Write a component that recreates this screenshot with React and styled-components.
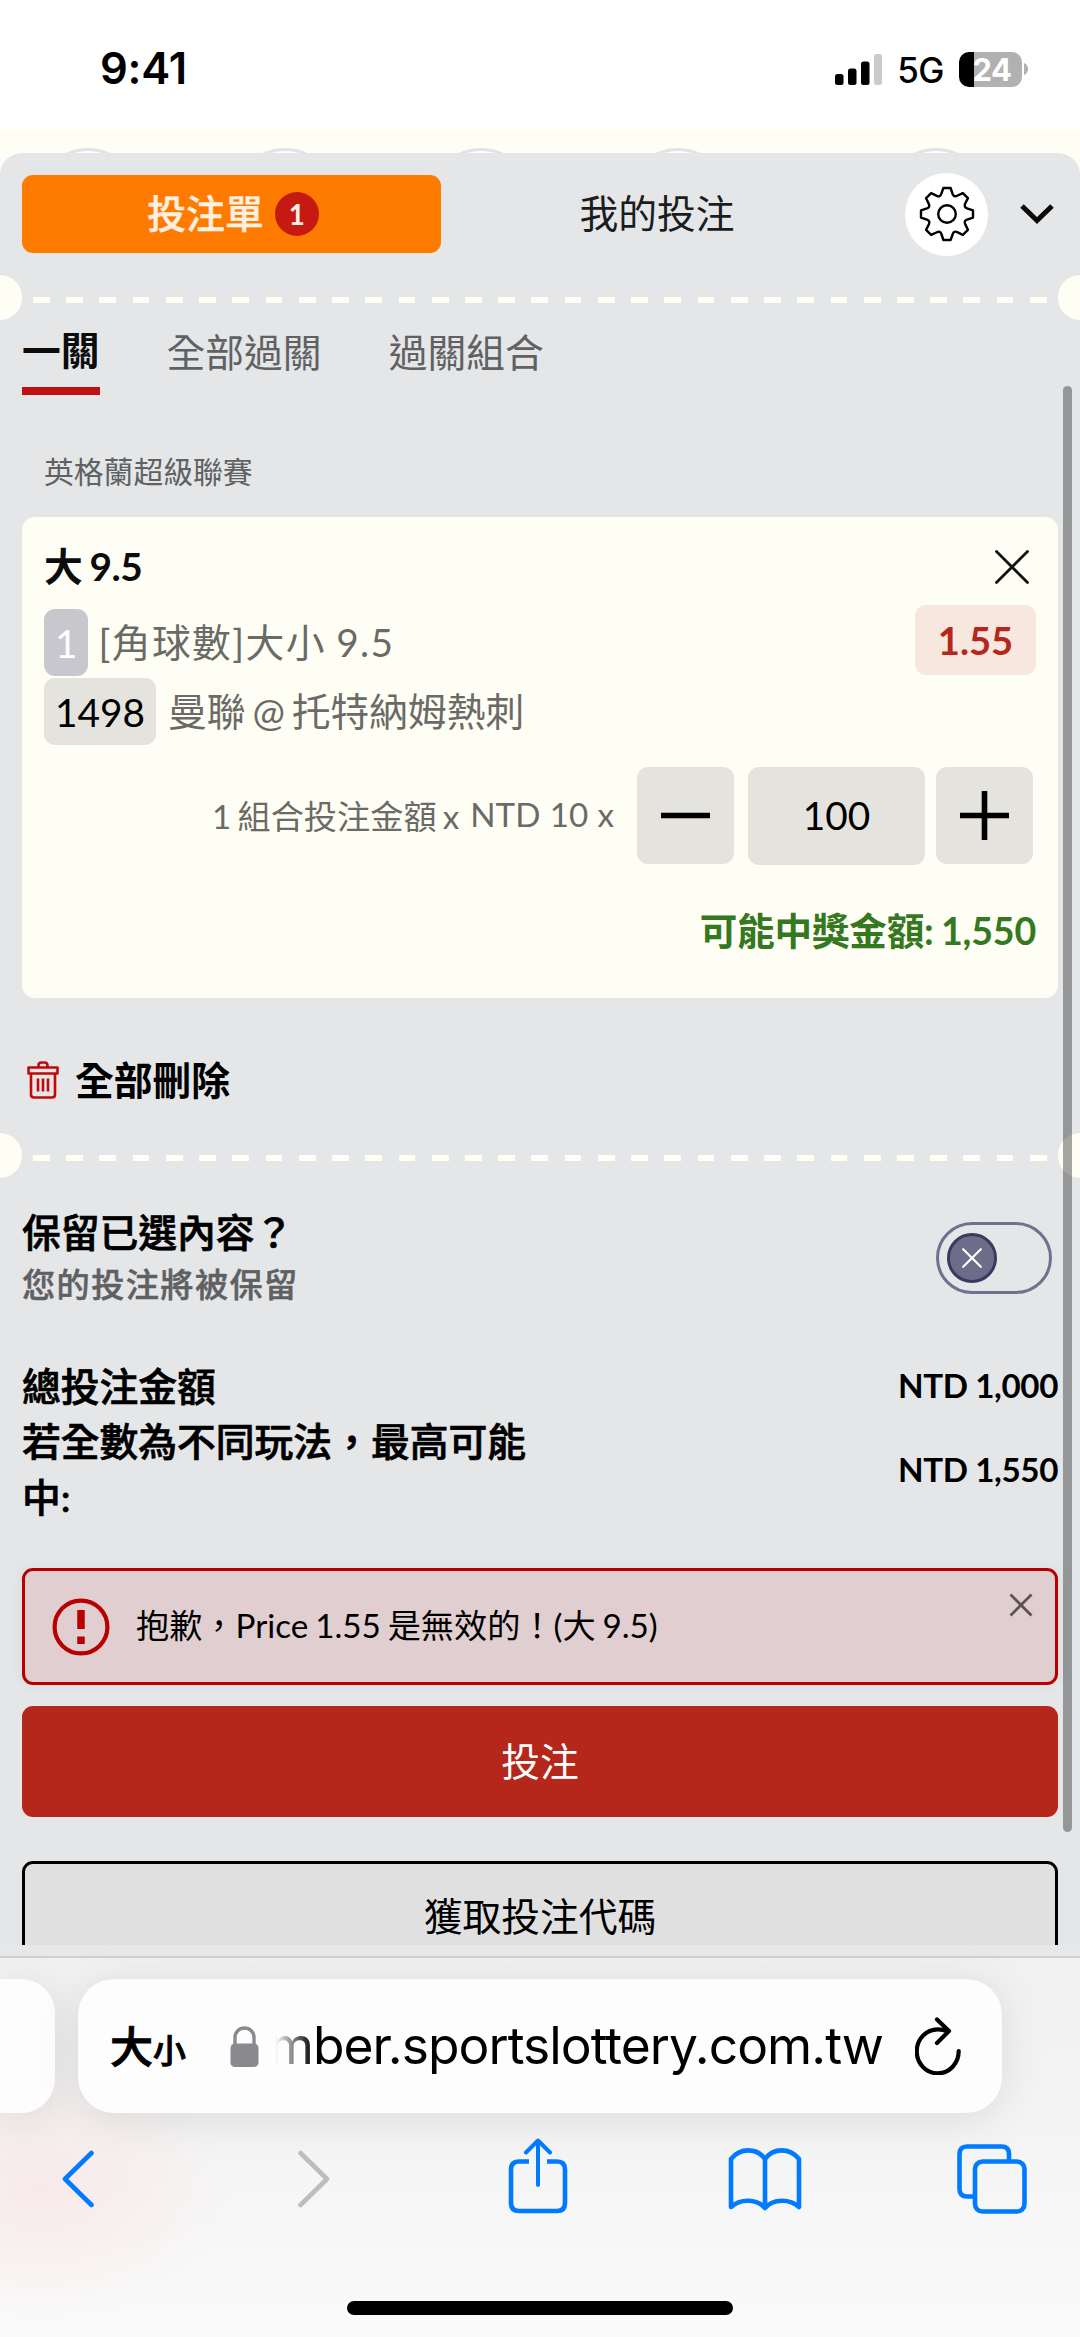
import React, { useState } from "react";
import styled, { createGlobalStyle, css } from "styled-components";

const sans = `Lato, "Noto Sans CJK TC", sans-serif`;
const system = `Inter, "Noto Sans CJK TC", sans-serif`;

const selection = {
  league: "英格蘭超級聯賽",
  pick: "大 9.5",
  market: "[角球數]大小 9.5",
  eventCode: "1498",
  match: "曼聯 @ 托特納姆熱刺",
  price: "1.55",
};

const betTypes = ["一關", "全部過關", "過關組合"];

// one tooth of the cog plus the valley up to the next one
const cogTooth = (i) => {
  const rotate = ([x, y]) => {
    const a = (i * Math.PI) / 4;
    const px = x * Math.cos(a) - y * Math.sin(a);
    const py = x * Math.sin(a) + y * Math.cos(a);
    return `${px.toFixed(2)} ${py.toFixed(2)}`;
  };
  return [
    `${i === 0 ? "M" : "L"}${rotate([-3.6, -26])}`,
    `L${rotate([3.6, -26])}`,
    `L${rotate([5.6, -20])}`,
    `Q${rotate([6.9, -16.6])} ${rotate([10.1, -18.2])}`,
  ].join(" ");
};
const cogPath = [0, 1, 2, 3, 4, 5, 6, 7].map(cogTooth).join(" ") + "Z";

function StatusBar() {
  return (
    <Status>
      <Clock>9:41</Clock>
      <StatusIcons>
        <svg width="47" height="31" viewBox="0 0 47 31">
          <rect x="0" y="20" width="8.5" height="11" rx="2.5" />
          <rect x="13" y="14.5" width="8.5" height="16.5" rx="2.5" />
          <rect x="26" y="7.5" width="8.5" height="23.5" rx="2.5" />
          <rect x="39" y="0" width="8" height="31" rx="2.5" fill="#cbcbcb" />
        </svg>
        <Network>5G</Network>
        <Battery>
          <span>24</span>
        </Battery>
        <svg width="5" height="12" viewBox="0 0 5 12">
          <path d="M0 0C5.5 2 5.5 10 0 12Z" fill="#b1b1b1" />
        </svg>
      </StatusIcons>
    </Status>
  );
}

function Perforation() {
  return (
    <Divider>
      <Notch />
      <Dashes />
      <Notch $right />
    </Divider>
  );
}

function SelectionCard({ stake, setStake }) {
  return (
    <Card>
      <CardTitle>
        <h3>{selection.pick}</h3>
        <svg width="34" height="34" viewBox="0 0 34 34">
          <path d="M1.5 1.5L32.5 32.5M32.5 1.5L1.5 32.5" stroke="#111" strokeWidth="2.8" strokeLinecap="round" />
        </svg>
      </CardTitle>
      <Details>
        <div className="lines">
          <DetailLine $spaced>
            <Tag $muted>1</Tag>
            <p>{selection.market}</p>
          </DetailLine>
          <DetailLine>
            <Tag>{selection.eventCode}</Tag>
            <p>{selection.match}</p>
          </DetailLine>
        </div>
        <Price>{selection.price}</Price>
      </Details>
      <StakeRow>
        <StakeLabel>
          <span className="count">1 組合投注金額 x</span>
          <span>NTD 10 x</span>
        </StakeLabel>
        <StepButton onClick={() => setStake(Math.max(0, stake - 1))}>
          <svg width="49" height="49" viewBox="0 0 49 49">
            <path d="M0 24.5H49" stroke="#000" strokeWidth="5.6" />
          </svg>
        </StepButton>
        <StakeValue>{stake}</StakeValue>
        <StepButton onClick={() => setStake(stake + 1)}>
          <svg width="49" height="49" viewBox="0 0 49 49">
            <path d="M0 24.5H49M24.5 0V49" stroke="#000" strokeWidth="5.6" />
          </svg>
        </StepButton>
      </StakeRow>
      <PossibleWin>可能中獎金額: 1,550</PossibleWin>
    </Card>
  );
}

function BrowserBar() {
  return (
    <Browser>
      <AddressRow>
        <NeighbourTab />
        <AddressBar>
          <TextSize>
            大<small>小</small>
          </TextSize>
          <svg width="29" height="41" viewBox="0 0 29 41">
            <path d="M5 19V11.5a9.5 9.5 0 0 1 19 0V19" fill="none" stroke="#8a898e" strokeWidth="3.4" />
            <rect x="0.5" y="17.5" width="28" height="23.5" rx="4.5" fill="#8a898e" />
          </svg>
          <Url>mber.sportslottery.com.tw</Url>
          <svg width="46" height="58" viewBox="0 0 46 58" fill="none" stroke="#000" strokeWidth="4.2" strokeLinecap="round" strokeLinejoin="round">
            <path d="M32 14.2C29 12.8 26 12.3 23 12.3A21 22 0 1 0 43.7 34" />
            <path d="M22 2.5L34 14L22 26" />
          </svg>
        </AddressBar>
      </AddressRow>
      <Toolbar>
        <ToolbarItem>
          <svg width="32" height="58" viewBox="0 0 32 58">
            <path d="M29.5 3L3 29L29.5 55" />
          </svg>
        </ToolbarItem>
        <ToolbarItem $shift={14} $disabled>
          <svg width="32" height="58" viewBox="0 0 32 58">
            <path d="M2.5 3L29 29L2.5 55" />
          </svg>
        </ToolbarItem>
        <ToolbarItem $shift={5} $raised>
          <svg width="60" height="76" viewBox="0 0 60 76">
            <path d="M21 23.5H11Q3 23.5 3 31.5V65Q3 73 11 73H49Q57 73 57 65V31.5Q57 23.5 49 23.5H39" strokeLinecap="butt" />
            <path d="M30 47V3M18 14.5L30 2.5L42 14.5" strokeWidth="4" />
          </svg>
        </ToolbarItem>
        <ToolbarItem $shift={3}>
          <svg width="74" height="64" viewBox="0 0 74 64">
            <path d="M37 12C29 .5 12 .5 3 12V60C12 51.5 29 51.5 37 61C45 51.5 62 51.5 71 60V12C62 .5 45 .5 37 12V61" />
          </svg>
        </ToolbarItem>
        <ToolbarItem>
          <svg width="70" height="70" viewBox="0 0 70 70">
            <path d="M17 52.5H10Q2.5 52.5 2.5 45V10Q2.5 2.5 10 2.5H44.5Q52 2.5 52 10V17" strokeLinecap="butt" />
            <rect x="18" y="17.5" width="49.5" height="50" rx="7.5" />
          </svg>
        </ToolbarItem>
      </Toolbar>
      <HomeIndicator />
    </Browser>
  );
}

export default function App() {
  const [activeType, setActiveType] = useState(0);
  const [stake, setStake] = useState(100);

  return (
    <Screen>
      <GlobalStyle />
      <StatusBar />
      <Backdrop>
        {[0, 1, 2, 3, 4].map((n) => (
          <Bubble key={n} />
        ))}
      </Backdrop>
      <Slip>
        <SlipHeader>
          <HeaderTab $active>
            <span>投注單</span>
            <Count>1</Count>
          </HeaderTab>
          <HeaderTab>
            <span>我的投注</span>
          </HeaderTab>
          <Settings>
            <svg width="60" height="60" viewBox="-30 -30 60 60" fill="none" stroke="#000" strokeWidth="2.4" strokeLinejoin="round">
              <path d={cogPath} />
              <circle r="8.8" />
            </svg>
          </Settings>
          <svg width="34" height="20" viewBox="0 0 34 20">
            <path d="M2 2L17 16.5L32 2" fill="none" stroke="#0a0a0a" strokeWidth="5" />
          </svg>
        </SlipHeader>
        <Perforation />
        <BetTypes>
          {betTypes.map((type, i) => (
            <BetType key={type} $active={i === activeType} onClick={() => setActiveType(i)}>
              {type}
            </BetType>
          ))}
        </BetTypes>
        <League>{selection.league}</League>
        <SelectionCard stake={stake} setStake={setStake} />
        <DeleteAll>
          <svg width="32" height="38" viewBox="0 0 32 38" fill="none" stroke="#c00a0a" strokeWidth="2.6" strokeLinejoin="round">
            <path d="M1.5 6.5H30.5V12.5H1.5ZM4 12.5V33.5Q4 36.5 7 36.5H25Q28 36.5 28 33.5V12.5M11.5 6.5V4.5Q11.5 1.5 14.5 1.5H17.5Q20.5 1.5 20.5 4.5V6.5M11 17.5V30.5M16 17.5V30.5M21 17.5V30.5" />
          </svg>
          <span>全部刪除</span>
        </DeleteAll>
        <Perforation />
        <KeepRow>
          <div>
            <h4>保留已選內容？</h4>
            <p>您的投注將被保留</p>
          </div>
          <Toggle>
            <Knob>
              <svg width="20" height="20" viewBox="0 0 20 20">
                <path d="M1.2 1.2L18.8 18.8M18.8 1.2L1.2 18.8" stroke="#fff" strokeWidth="2.2" strokeLinecap="round" />
              </svg>
            </Knob>
          </Toggle>
        </KeepRow>
        <Summary>
          <dt>總投注金額</dt>
          <dd>NTD 1,000</dd>
          <dt>若全數為不同玩法，最高可能中:</dt>
          <dd>NTD 1,550</dd>
        </Summary>
        <Alert>
          <svg width="58" height="58" viewBox="0 0 58 58">
            <circle cx="29" cy="29" r="26.4" fill="none" stroke="#b90000" strokeWidth="4.2" />
            <path d="M29 12V31M29 38.5V46" stroke="#b90000" strokeWidth="7.5" />
          </svg>
          <p>抱歉，Price 1.55 是無效的！(大 9.5)</p>
          <svg className="close" width="24" height="24" viewBox="0 0 24 24">
            <path d="M1.5 1.5L22.5 22.5M22.5 1.5L1.5 22.5" stroke="#5c5357" strokeWidth="2.8" />
          </svg>
        </Alert>
        <PlaceBet>投注</PlaceBet>
        <GetCode>獲取投注代碼</GetCode>
        <Scrollbar />
      </Slip>
      <BrowserBar />
    </Screen>
  );
}

const GlobalStyle = createGlobalStyle`
  *, *::before, *::after {
    box-sizing: border-box;
    margin: 0;
    padding: 0;
  }
  body {
    background: #fff;
    font-family: ${sans};
    color: #000;
  }
  button {
    border: none;
    background: none;
    font-family: inherit;
    color: inherit;
  }
  svg {
    display: block;
    flex: none;
  }
`;

const Screen = styled.div`
  width: 1080px;
  height: 2337px;
  display: flex;
  flex-direction: column;
  overflow: hidden;
  background: #fffef5;
`;

const Status = styled.header`
  flex: none;
  height: 130px;
  display: flex;
  justify-content: space-between;
  align-items: center;
  padding: 8px 51px 0 100px;
  background: #fff;
  font-family: ${system};
`;

const Clock = styled.span`
  margin-top: -2px;
  font-size: 43.5px;
  font-weight: 600;
  letter-spacing: -0.2px;
`;

const StatusIcons = styled.div`
  display: flex;
  align-items: center;
`;

const Network = styled.span`
  margin: 2px 15px 0 15px;
  font-size: 35px;
  font-weight: 500;
  letter-spacing: -0.5px;
`;

const Battery = styled.div`
  width: 63px;
  height: 35px;
  margin-right: 2px;
  padding-left: 3px;
  display: flex;
  align-items: center;
  justify-content: center;
  border-radius: 10px;
  background: linear-gradient(90deg, #000 15px, #b1b1b1 15px);
  color: #fff;
  font-size: 31px;
  font-weight: 700;
  letter-spacing: -0.5px;
`;

const Backdrop = styled.div`
  flex: none;
  height: 23px;
  display: flex;
  overflow: hidden;
  padding: 18px 0 0 37px;
  gap: 94.5px;
`;

const Bubble = styled.span`
  flex: none;
  width: 102px;
  height: 102px;
  border: 3px solid #e2e3e8;
  border-radius: 50%;
  background: #fff;
  &:last-child {
    margin-left: 62px;
  }
`;

const Slip = styled.main`
  position: relative;
  flex: none;
  height: 1792px;
  overflow: hidden;
  display: flex;
  flex-direction: column;
  border-radius: 22px 22px 0 0;
  background: #e4e6e8;
  & > * {
    flex: none;
  }
`;

const SlipHeader = styled.div`
  height: 122px;
  display: flex;
  align-items: center;
  padding: 0 26px 0 22px;
`;

const HeaderTab = styled.button`
  width: 419px;
  height: 78px;
  display: flex;
  align-items: center;
  justify-content: center;
  gap: 11px;
  border-radius: 11px;
  font-size: 38.77px;
  color: #1b1c1d;
  span:first-child {
    margin-top: -6px;
  }
  & + & {
    width: 432px;
  }
  ${({ $active }) =>
    $active &&
    css`
      padding-left: 3px;
      background: #ff7b00;
      color: #fff0e2;
      font-weight: 500;
      -webkit-text-stroke: 0.4px;
    `}
`;

const Count = styled.span`
  width: 44px;
  height: 44px;
  display: flex;
  align-items: center;
  justify-content: center;
  border-radius: 50%;
  background: #c41a12;
  font-size: 27.7px;
  font-weight: 700;
  -webkit-text-stroke: 0;
`;

const Settings = styled.div`
  width: 83px;
  height: 83px;
  margin: 0 auto 0 32px;
  display: flex;
  align-items: center;
  justify-content: center;
  border-radius: 50%;
  background: #fff;
`;

const Divider = styled.div`
  height: 45px;
  display: flex;
  align-items: center;
  justify-content: space-between;
`;

const Notch = styled.span`
  width: 22px;
  height: 45px;
  background: #fffef5;
  border-radius: ${({ $right }) => ($right ? "22px 0 0 22px" : "0 22px 22px 0")};
`;

const Dashes = styled.span`
  width: 1014px;
  height: 6px;
  margin-top: 5px;
  background: repeating-linear-gradient(90deg, #fffef5 0 16.8px, transparent 16.8px 33.23px);
`;

const BetTypes = styled.nav`
  height: 75px;
  display: flex;
  align-items: flex-start;
  gap: 67px;
  padding-left: 22px;
`;

const BetType = styled.button`
  height: 66px;
  padding-bottom: 6px;
  font-size: 38.77px;
  color: #5f6163;
  ${({ $active }) =>
    $active &&
    css`
      height: 75px;
      padding-bottom: 15px;
      border-bottom: 8px solid #bf1013;
      font-weight: 700;
      color: #0c0c0c;
    `}
`;

const League = styled.h2`
  height: 122px;
  padding: 55px 44px 0;
  font-size: 29.8px;
  line-height: 44px;
  font-weight: 400;
  color: #5f6163;
`;

const Card = styled.section`
  height: 481px;
  margin: 0 22px;
  padding: 12px 22px 0;
  border-radius: 13px;
  background: #fffef5;
`;

const CardTitle = styled.div`
  height: 76px;
  display: flex;
  align-items: center;
  justify-content: space-between;
  padding-right: 7px;
  h3 {
    margin-top: -6px;
    font-size: 38.77px;
    font-weight: 700;
    word-spacing: -2px;
    letter-spacing: -0.4px;
    color: #0c0c0c;
  }
`;

const Details = styled.div`
  display: flex;
  justify-content: space-between;
  align-items: flex-start;
  .lines {
    display: flex;
    flex-direction: column;
    gap: 2px;
    padding-top: 4px;
  }
`;

const DetailLine = styled.div`
  height: 67px;
  display: flex;
  align-items: center;
  gap: ${({ $spaced }) => ($spaced ? "10px" : "12px")};
  font-size: 38.77px;
  color: #6a6a67;
  letter-spacing: ${({ $spaced }) => ($spaced ? "1.4px" : "0")};
  word-spacing: ${({ $spaced }) => ($spaced ? "-1px" : "-3px")};
  p {
    margin-top: -6px;
  }
`;

const Tag = styled.span`
  height: 67px;
  display: flex;
  align-items: center;
  padding: 0 11px;
  border-radius: 11px;
  letter-spacing: 0;
  background: ${({ $muted }) => ($muted ? "#c8c7cd" : "#e5e3dd")};
  color: ${({ $muted }) => ($muted ? "#fff" : "#000")};
`;

const Price = styled.span`
  width: 121px;
  height: 70px;
  display: flex;
  align-items: center;
  justify-content: center;
  border-radius: 11px;
  background: #f8e7df;
  color: #b5261b;
  font-size: 38.2px;
  font-weight: 700;
`;

const StakeRow = styled.div`
  display: flex;
  justify-content: flex-end;
  align-items: flex-start;
  margin-top: 22px;
  padding-right: 3px;
`;

const StakeLabel = styled.div`
  height: 97px;
  display: flex;
  align-items: center;
  gap: 11px;
  margin-right: 23px;
  padding-bottom: 3px;
  font-size: 33.2px;
  word-spacing: 0.8px;
  color: #6a6a67;
  .count {
    word-spacing: -2.4px;
  }
`;

const StepButton = styled.button`
  width: 97px;
  height: 97px;
  display: flex;
  align-items: center;
  justify-content: center;
  border-radius: 11px;
  background: #e5e3dd;
`;

const StakeValue = styled.div`
  width: 177px;
  height: 98px;
  margin: 0 11px 0 14px;
  padding-bottom: 2px;
  display: flex;
  align-items: center;
  justify-content: center;
  border-radius: 11px;
  background: #e5e3dd;
  font-size: 38.77px;
`;

const PossibleWin = styled.p`
  height: 134px;
  padding-bottom: 7px;
  display: flex;
  align-items: center;
  justify-content: flex-end;
  font-size: 37.6px;
  font-weight: 700;
  letter-spacing: -0.2px;
  word-spacing: -1.5px;
  color: #34781f;
`;

const DeleteAll = styled.button`
  height: 135px;
  display: flex;
  align-items: center;
  gap: 16px;
  padding: 29px 0 0 27px;
  font-size: 38.77px;
  font-weight: 700;
  span {
    margin-top: -5px;
  }
`;

const KeepRow = styled.div`
  height: 160px;
  display: flex;
  align-items: center;
  justify-content: space-between;
  padding: 0 28px 0 22px;
  h4 {
    margin-top: -2px;
    font-size: 38.77px;
    line-height: 54px;
    font-weight: 500;
    -webkit-text-stroke: 0.7px;
  }
  p {
    font-size: 33.2px;
    line-height: 50px;
    font-weight: 500;
    letter-spacing: 1.4px;
    color: #5f6062;
    -webkit-text-stroke: 0.5px;
  }
`;

const Toggle = styled.div`
  width: 116px;
  height: 72px;
  padding: 0 8px;
  display: flex;
  align-items: center;
  border: 3px solid #736f8e;
  border-radius: 36px;
`;

const Knob = styled.span`
  width: 50px;
  height: 50px;
  display: flex;
  align-items: center;
  justify-content: center;
  border: 3px solid #3b3960;
  border-radius: 50%;
  background: #6e6d89;
`;

const Summary = styled.dl`
  display: grid;
  grid-template-columns: 1fr 1fr;
  align-items: center;
  padding: 20px 22px 0;
  line-height: 55.4px;
  dt {
    font-size: 38.77px;
    font-weight: 500;
    -webkit-text-stroke: 0.7px;
  }
  dd {
    padding-bottom: 1px;
    font-size: 33.2px;
    font-weight: 700;
    letter-spacing: -0.4px;
    text-align: right;
  }
`;

const Alert = styled.div`
  height: 117px;
  margin: 43px 22px 21px;
  padding: 0 22px 0 27px;
  display: flex;
  align-items: center;
  border: 3px solid #b90000;
  border-radius: 11px;
  background: #e1ced0;
  box-shadow: 0 0 14px rgba(0, 0, 0, 0.05);
  p {
    margin: -6px 0 0 26px;
    font-size: 33.2px;
    word-spacing: -1.6px;
  }
  .close {
    align-self: flex-start;
    margin: 22px 0 0 auto;
  }
`;

const PlaceBet = styled.button`
  height: 111px;
  margin: 0 22px 44px;
  padding-bottom: 6px;
  border-radius: 11px;
  background: #b5261b;
  color: #fff;
  font-size: 38.77px;
`;

const GetCode = styled(PlaceBet)`
  margin-bottom: 0;
  border: 3px solid #000;
  background: #e0e0e0;
  color: #000;
`;

const Scrollbar = styled.span`
  position: absolute;
  top: 233px;
  right: 8px;
  width: 9px;
  height: 1446px;
  border-radius: 5px;
  background: rgba(0, 0, 0, 0.35);
`;

const Browser = styled.footer`
  flex: 1;
  display: flex;
  flex-direction: column;
  border-top: 11px solid #e6e8ea;
  background:
    linear-gradient(#cfd0d1 2px, transparent 2px),
    radial-gradient(ellipse 190px 130px at 40px 235px, rgba(255, 200, 200, 0.28), transparent),
    linear-gradient(#f1f1f1, #f4f4f4 45%, #fafafa);
`;

const AddressRow = styled.div`
  display: flex;
  gap: 23px;
  margin-top: 23px;
`;

const NeighbourTab = styled.div`
  width: 55px;
  height: 134px;
  border-radius: 0 34px 34px 0;
  background: #fdfdfd;
  box-shadow: 0 6px 45px rgba(0, 0, 0, 0.1);
`;

const AddressBar = styled.div`
  width: 924px;
  height: 134px;
  display: flex;
  align-items: center;
  padding: 0 41px 0 32px;
  border-radius: 36px;
  background: #fdfdfd;
  box-shadow: 0 6px 45px rgba(0, 0, 0, 0.1);
`;

const TextSize = styled.span`
  width: 120px;
  margin-top: -4px;
  font-family: "Noto Sans CJK TC", sans-serif;
  font-size: 43px;
  font-weight: 500;
  white-space: nowrap;
  -webkit-text-stroke: 0.9px;
  small {
    font-size: 33px;
  }
`;

const Url = styled.div`
  flex: 1;
  height: 70px;
  display: flex;
  justify-content: flex-end;
  margin: -3px 32px 0 8px;
  font-family: ${system};
  font-size: 51.5px;
  line-height: 70px;
  letter-spacing: -0.95px;
  white-space: nowrap;
  mask-image: linear-gradient(90deg, transparent 8px, #000 46px);
`;

const Toolbar = styled.div`
  display: flex;
  align-items: center;
  justify-content: space-between;
  margin-top: 25px;
  padding: 0 53px 0 43px;
`;

const ToolbarItem = styled.div`
  width: 70px;
  display: flex;
  justify-content: center;
  padding-left: ${({ $shift }) => $shift || 0}px;
  margin-bottom: ${({ $raised }) => ($raised ? "5px" : "0")};
  svg {
    fill: none;
    stroke: ${({ $disabled }) => ($disabled ? "#bdbdbf" : "#007aff")};
    stroke-width: 4.6;
    stroke-linecap: round;
    stroke-linejoin: round;
  }
`;

const HomeIndicator = styled.span`
  width: 386px;
  height: 14px;
  margin: auto auto 22px;
  border-radius: 7px;
  background: #000;
`;
